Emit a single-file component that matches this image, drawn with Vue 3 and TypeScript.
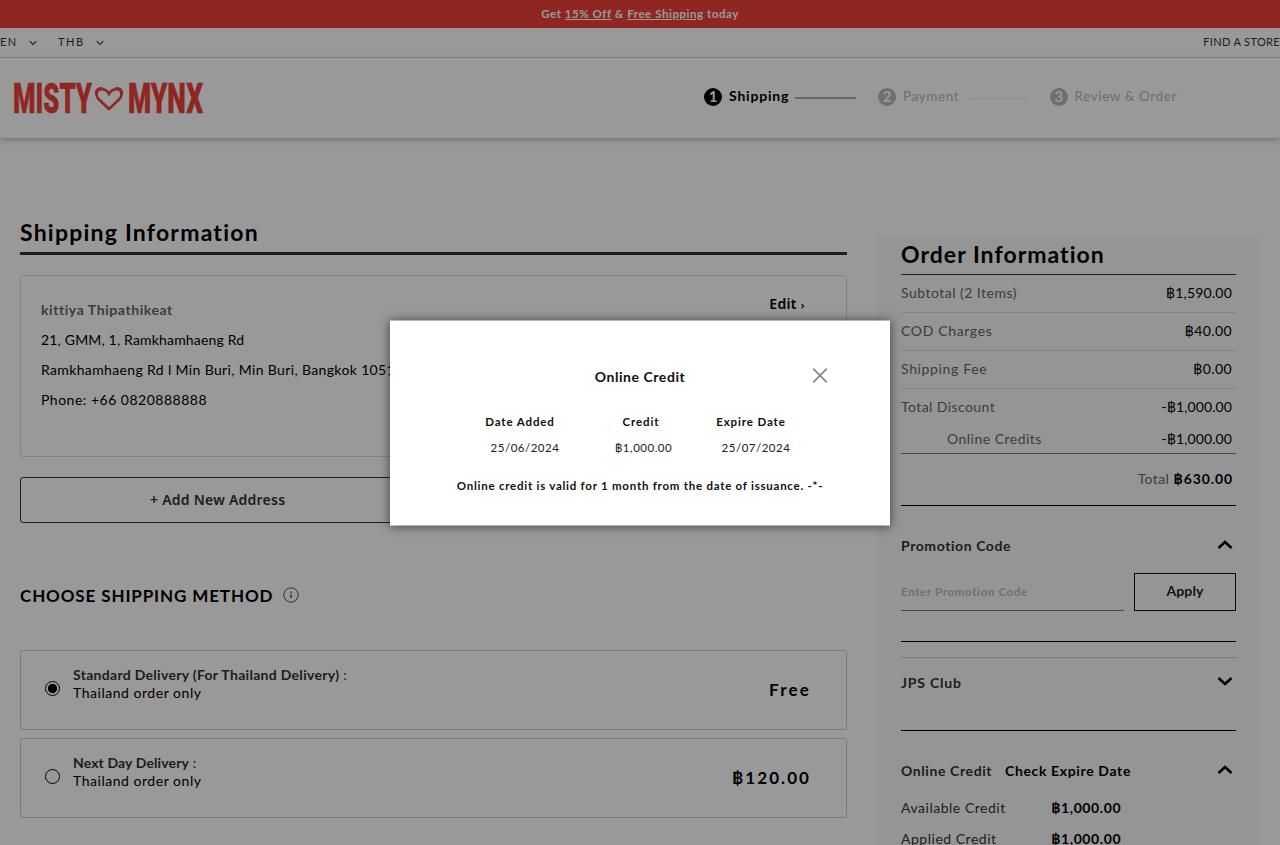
<script setup lang="ts">
import { ref } from 'vue'

interface Step { n: number; label: string; state: string }
interface Row { key: string; label: string; value: string }
interface Method { id: string; name: string; note: string; price: string }

const steps: Step[] = [
  { n: 1, label: 'Shipping', state: 'active' },
  { n: 2, label: 'Payment', state: 'upcoming' },
  { n: 3, label: 'Review & Order', state: 'last' },
]
const rows: Row[] = [
  { key: 'sub', label: 'Subtotal (2 Items)', value: '฿1,590.00' },
  { key: 'cod', label: 'COD Charges', value: '฿40.00' },
  { key: 'fee', label: 'Shipping Fee', value: '฿0.00' },
  { key: 'disc', label: 'Total Discount', value: '-฿1,000.00' },
  { key: 'credit', label: 'Online Credits', value: '-฿1,000.00' },
]
const methods: Method[] = [
  { id: 'standard', name: 'Standard Delivery (For Thailand Delivery)', note: 'Thailand order only', price: 'Free' },
  { id: 'nextday', name: 'Next Day Delivery', note: 'Thailand order only', price: '฿120.00' },
]
const selected = ref('standard')
const modalOpen = ref(true)
</script>

<template>
  <div class="page">
    <div class="promo">Get&nbsp;<u>15% Off</u>&nbsp;&amp;&nbsp;<u>Free Shipping</u>&nbsp;today</div>
    <div class="util">
      <span class="lang">EN</span>
      <svg class="tiny" viewBox="0 0 8 6"><path d="M.7 1.2 4 4.4 7.3 1.2" /></svg>
      <span class="cur">THB</span>
      <svg class="tiny" viewBox="0 0 8 6"><path d="M.7 1.2 4 4.4 7.3 1.2" /></svg>
      <span class="store">FIND A STORE</span>
    </div>
    <header class="header">
      <svg class="logo" width="192" height="36" viewBox="0 0 192 36">
        <text x="0" y="33" textLength="79" lengthAdjust="spacingAndGlyphs">MISTY</text>
        <text x="115" y="33" textLength="75" lengthAdjust="spacingAndGlyphs">MYNX</text>
        <path class="heart" d="M96 29 86 19.500C81.500 15 83.500 9.300 88.500 9.300c3.500 0 6 1.700 7.500 4.500C97.500 11 100 9.300 103.500 9.300c5 0 7 5.700 2.500 10.200Z" />
        <path class="wing" d="M83.200 15C82.300 10 85.500 7.500 89.500 8.300M108.800 15c.9-5-2.300-7.500-6.300-6.700" />
      </svg>
      <nav class="steps">
        <div v-for="s in steps" :key="s.n" class="step" :class="s.state">
          <i class="num">{{ s.n }}</i><span class="step-label">{{ s.label }}</span><b v-if="s.n < 3" class="dash"></b>
        </div>
      </nav>
    </header>

    <main class="columns">
      <section class="left">
        <h1 class="title">Shipping Information</h1>
        <div class="address">
          <div class="lines">
            <p class="who">kittiya Thipathikeat</p>
            <p class="street">21, GMM, 1, Ramkhamhaeng Rd</p>
            <p class="area">Ramkhamhaeng Rd l Min Buri, Min Buri, Bangkok 10510</p>
            <p class="phone">Phone: +66 0820888888</p>
          </div>
          <a class="edit">Edit <small>›</small></a>
        </div>
        <button class="add">+ Add New Address</button>
        <h2 class="choose">
          <span>CHOOSE SHIPPING METHOD</span>
          <svg width="16" height="16" viewBox="0 0 16 16"><circle cx="8" cy="8" r="7.200" /><path class="stem" d="M8 7.200v3.800M8 4.600v1.300" /></svg>
        </h2>
        <div v-for="m in methods" :key="m.id" class="method" :class="m.id" @click="selected = m.id">
          <i class="radio" :class="{ on: selected === m.id }"></i>
          <div class="method-text">
            <div class="m-name"><b>{{ m.name }}</b> :</div>
            <div class="m-note">{{ m.note }}</div>
          </div>
          <span class="price">{{ m.price }}</span>
        </div>
      </section>

      <aside class="side">
        <h1 class="side-title">Order Information</h1>
        <div v-for="r in rows" :key="r.key" class="row" :class="r.key">
          <span class="row-label">{{ r.label }}</span><span class="row-value">{{ r.value }}</span>
        </div>
        <div class="total"><span>Total</span><b>฿630.00</b></div>
        <div class="promo-block">
          <div class="panel-head"><b>Promotion Code</b>
            <svg class="chev" viewBox="0 0 16 10"><path d="M1.500 8 8 2 14.500 8" /></svg>
          </div>
          <div class="promo-form"><div class="field">Enter Promotion Code</div><button class="apply">Apply</button></div>
        </div>
        <div class="club">
          <b>JPS Club</b>
          <svg class="chev" viewBox="0 0 16 10"><path d="M1.500 2 8 8 14.500 2" /></svg>
        </div>
        <div class="credit-head"><b class="h-credit">Online Credit</b><b class="check">Check Expire Date</b>
          <svg class="chev" viewBox="0 0 16 10"><path d="M1.500 8 8 2 14.500 8" /></svg>
        </div>
        <div class="credit-row"><span>Available Credit</span><b>฿1,000.00</b></div>
        <div class="credit-row"><span>Applied Credit</span><b>฿1,000.00</b></div>
      </aside>
    </main>

    <div v-if="modalOpen" class="overlay">
      <div class="modal">
        <h3 class="m-title">Online Credit</h3>
        <svg class="close" width="16" height="16" viewBox="0 0 16 16" @click="modalOpen = false"><path d="M1.200 1.200l13.600 13.600M14.800 1.200 1.200 14.800" /></svg>
        <div class="grid">
          <b>Date Added</b><b class="g-b">Credit</b><b>Expire Date</b>
          <span>25/06/2024</span><span class="v-b">฿1,000.00</span><span>25/07/2024</span>
        </div>
        <p class="valid">Online credit is valid for 1 month from the date of issuance. -*-</p>
      </div>
    </div>
  </div>
</template>

<style>
html, body { margin: 0; overflow: hidden; background: #fff; }
</style>

<style scoped>
* { box-sizing: border-box; }
.page { position: relative; width: 1280px; height: 845px; overflow: hidden; font-family: Lato, "Noto Sans", sans-serif; font-size: 14px; color: #000; background: #fff; white-space: nowrap; }
h1, h2, h3, p { margin: 0; }
svg { display: block; fill: none; flex: none; }
button { font: inherit; background: none; padding: 0; color: inherit; }

.promo { height: 28px; display: flex; align-items: center; justify-content: center; padding-bottom: 2px; background: #ee4037; color: #fff; font-size: 11.5px; font-weight: 700; letter-spacing: .54px; }
.util { height: 30px; display: flex; align-items: center; border-bottom: 1px solid #ddd; font-size: 11px; color: #333; }
.util span { padding-bottom: 2px; }
.lang { width: 29px; letter-spacing: 1.4px; }
.cur { width: 38px; margin-left: 21px; letter-spacing: 1.5px; }
.tiny { width: 8px; height: 6px; stroke: #333; stroke-width: 1.1; margin-top: 1px; }
.store { margin-left: auto; letter-spacing: .35px; }
.header { height: 80px; display: flex; justify-content: space-between; box-shadow: 0 2px 6px rgba(0,0,0,.25); padding: 22px 103px 0 13px; }
.logo { overflow: visible; }
.logo text { font-family: Roboto, sans-serif; font-weight: 900; font-size: 42px; fill: #ee4037; stroke: #ee4037; stroke-width: .5; }
.heart { stroke: #ee4037; stroke-width: 2.6; }
.wing { stroke: #ee4037; stroke-width: 2.4; }
.steps { display: flex; padding-top: 8px; height: 26px; }
.step { display: flex; align-items: center; height: 18px; color: #b9b9b9; }
.num { width: 18px; height: 18px; border-radius: 50%; background: #b9b9b9; color: #fff; font-style: normal; font-weight: 700; font-size: 15px; line-height: 17px; text-align: center; margin-right: 7px; }
.step-label { font-size: 13.5px; letter-spacing: .6px; padding-bottom: 2px; }
.active { width: 174px; color: #000; }
.active .step-label { width: 66px; font-weight: 700; font-size: 14px; letter-spacing: .8px; padding-bottom: 3px; }
.active .num { background: #000; }
.active .dash { width: 61px; height: 2px; background: #aaa; margin-top: 2px; }
.upcoming { width: 172px; }
.upcoming .step-label { width: 66px; }
.upcoming .dash { width: 59px; height: 1px; background: #ebebeb; margin-top: 2px; }
.last { width: 127px; }

.columns { display: flex; align-items: flex-start; padding-left: 20px; }
.left { width: 827px; padding-top: 77px; }
.title { height: 40px; line-height: 34px; border-bottom: 3px solid #333; font-size: 23px; letter-spacing: 1.22px; margin-bottom: 20px; }
.address { height: 182px; border: 1px solid #d9d9d9; border-radius: 3px; padding: 19px 41px 0 20px; display: flex; justify-content: space-between; align-items: flex-start; }
.lines p { line-height: 30px; font-size: 14px; letter-spacing: .5px; }
.lines .who { font-weight: 700; color: #666; letter-spacing: .57px; }
.lines .street { letter-spacing: .18px; }
.lines .area { letter-spacing: .36px; }
.edit { font-family: "Noto Sans", sans-serif; font-weight: 600; font-size: 14px; line-height: 18px; letter-spacing: .35px; }
.edit small { font-size: 11px; }
.add { display: block; width: 827px; height: 46px; margin-top: 20px; border: 1px solid #333; border-radius: 3px; text-align: left; padding: 0 0 2px 129px; font-family: "Noto Sans", sans-serif; font-weight: 600; font-size: 14px; letter-spacing: .24px; color: #333; }
.choose { display: flex; align-items: center; gap: 10px; height: 30px; margin: 58px 0 39px; font-size: 17px; letter-spacing: .88px; }
.choose span { padding-bottom: 2px; }
.choose svg { stroke: #555; stroke-width: 1; margin-top: -2px; }
.choose .stem { stroke-width: 1.5; }
.method { height: 80px; border: 1px solid #ccc; border-radius: 3px; margin-bottom: 8px; display: flex; padding: 0 35px 0 24px; }
.radio { width: 15px; height: 15px; border: 1px solid #000; border-radius: 50%; margin-top: 30px; flex: none; }
.radio.on { background: radial-gradient(circle, #000 4.300px, transparent 5px); }
.method-text { margin: 15px auto 0 13px; line-height: 18px; font-size: 14px; }
.m-name { color: #333; letter-spacing: .12px; }
.standard .m-name { letter-spacing: .3px; }
.m-note { letter-spacing: .53px; }
.price { font-weight: 700; font-size: 17px; letter-spacing: 2.2px; line-height: 77px; }
.nextday .price { letter-spacing: 2.05px; }

.side { width: 383px; height: 620px; margin: 100px 0 0 30px; padding: 0 24px; background: #f9f9f9; }
.side-title { height: 37px; line-height: 32px; border-bottom: 1px solid #333; font-size: 23px; letter-spacing: 1.04px; }
.row { height: 38px; display: flex; justify-content: space-between; align-items: center; border-bottom: 1px solid #ddd; padding: 0 4px 2px 0; font-size: 14px; letter-spacing: .48px; }
.row-label { color: #666; }
.row-value { letter-spacing: .2px; }
.cod .row-value, .fee .row-value { letter-spacing: .4px; }
.cod .row-label, .fee .row-label { letter-spacing: .65px; }
.disc { border: 0; padding-bottom: 3px; }
.disc .row-label { letter-spacing: .42px; }
.credit { height: 27px; padding: 0 4px 4px 46px; border-bottom-color: #777; }
.disc .row-value, .credit .row-value { letter-spacing: .1px; }
.total { height: 52px; display: flex; justify-content: flex-end; align-items: center; gap: 4px; padding: 0 3px 2px 0; border-bottom: 1px solid #000; letter-spacing: .4px; }
.total b { letter-spacing: .9px; }
.total span { color: #666; }
.promo-block { height: 136px; padding-top: 29px; border-bottom: 1px solid #000; margin-bottom: 15px; color: #333; }
.panel-head { display: flex; height: 20px; align-items: center; justify-content: space-between; letter-spacing: .58px; }
.chev { width: 16px; height: 10px; stroke: #000; stroke-width: 2.600; margin-right: 3px; }
.promo-form { display: flex; justify-content: space-between; margin-top: 18px; }
.field { width: 223px; height: 38px; line-height: 38px; border-bottom: 1px solid #777; color: #bbb; font-size: 11.500px; font-weight: 700; letter-spacing: .65px; }
.apply { width: 102px; height: 38px; border: 1px solid #111; font-weight: 700; color: #222; padding-bottom: 3px; letter-spacing: .1px; }
.club { height: 74px; display: flex; justify-content: space-between; padding-top: 16px; border-top: 1px solid #ccc; border-bottom: 1px solid #000; color: #333; letter-spacing: .8px; }
.club .chev { margin-top: 2px; }
.credit-head { display: flex; align-items: center; height: 20px; margin: 29px 0 12px; letter-spacing: .64px; }
.h-credit { width: 104px; color: #333; letter-spacing: .6px; }
.credit-head .chev { margin-left: auto; }
.credit-row { display: flex; height: 31px; line-height: 31px; letter-spacing: .6px; }
.credit-row span { width: 150px; color: #333; letter-spacing: .52px; }

.overlay { position: absolute; inset: 0; background: rgba(0,0,0,.4); }
.modal { position: absolute; left: 50%; top: 50%; width: 500px; height: 205px; transform: translate(-50%, -50%); background: #fff; box-shadow: 0 0 10px rgba(0,0,0,.6); color: #111; text-align: center; }
.m-title { padding-top: 45px; line-height: 22px; font-size: 14px; letter-spacing: .55px; }
.close { position: absolute; left: 422px; top: 47px; stroke: #888; stroke-width: 1.700; }
.grid { display: grid; grid-template-columns: 120px 122px 98px; grid-template-rows: 26px 26px; line-height: 26px; margin: 21px 0 0 70px; font-size: 11.500px; letter-spacing: .5px; }
.grid b { letter-spacing: .88px; }
.grid span { padding-left: 10px; color: #222; }
.grid .v-b { padding-left: 5px; }
.valid { margin-top: 12px; line-height: 26px; font-weight: 700; font-size: 11.500px; letter-spacing: .75px; }
</style>
